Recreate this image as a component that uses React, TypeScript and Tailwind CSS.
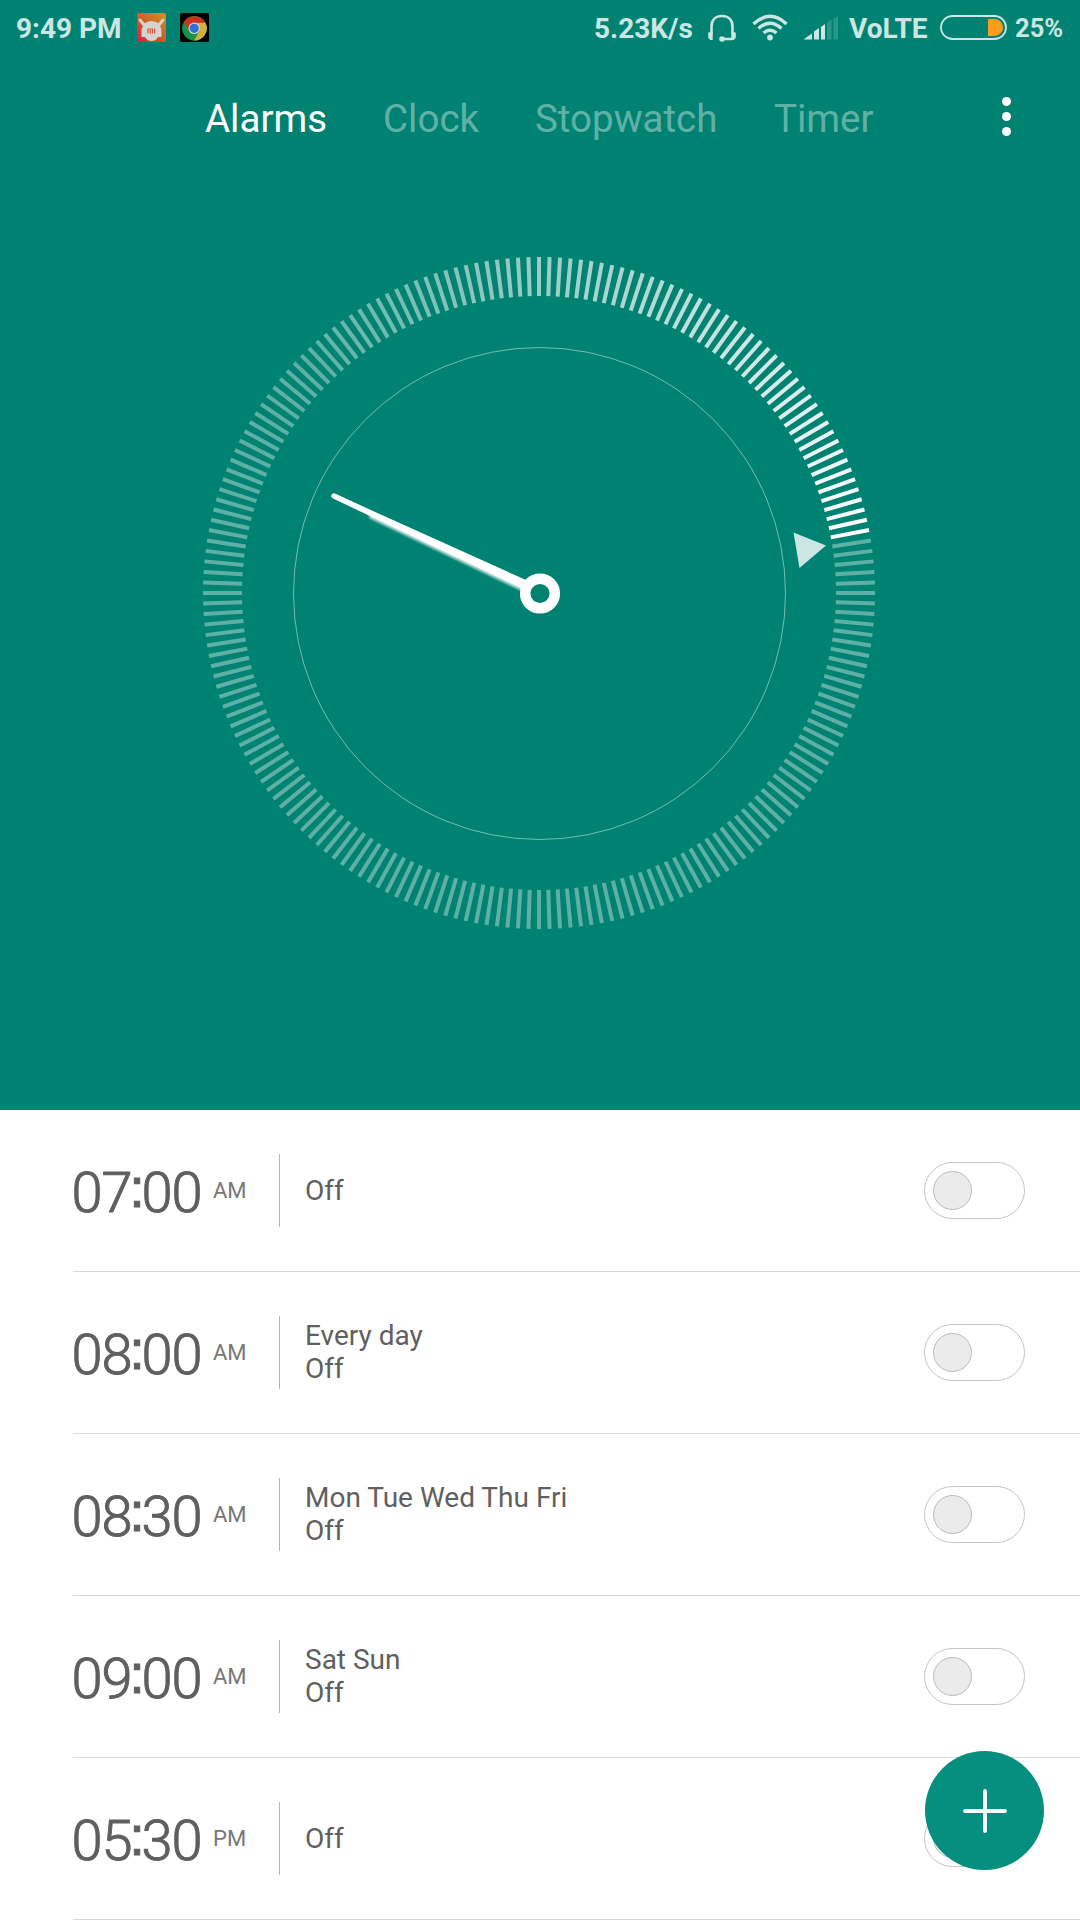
const TICKS = Array.from({ length: 200 }, (_, i) => i);

function tickOpacity(i: number) {
  const behind = (44 - i + 200) % 200;
  return Math.max(0.37, 1 - behind * 0.0091);
}

const ALARMS = [
  { time: "07:00", half: "AM", repeat: "" },
  { time: "08:00", half: "AM", repeat: "Every day" },
  { time: "08:30", half: "AM", repeat: "Mon Tue Wed Thu Fri" },
  { time: "09:00", half: "AM", repeat: "Sat Sun" },
  { time: "05:30", half: "PM", repeat: "" },
];

function MiIcon() {
  return (
    <svg width="29" height="29" viewBox="0 0 29 29" className="ml-4 -mt-[2px]">
      <defs>
        <linearGradient id="mi" x1="0" y1="1" x2="0.8" y2="0">
          <stop offset="0" stopColor="#d81b52" />
          <stop offset="0.45" stopColor="#cf5426" />
          <stop offset="1" stopColor="#d08b25" />
        </linearGradient>
      </defs>
      <rect width="29" height="29" rx="1.5" fill="url(#mi)" />
      <path d="M3 7L8 13M26 7L21 13" stroke="#d3d3d3" strokeWidth="3" strokeLinecap="round" />
      <path d="M8 10Q14.5 6 21 10Q24 13 24.5 17V24H21Q19 28 14.5 28T8 24H4.5V17Q5 13 8 10Z" fill="#d3d3d3" />
      <path d="M11 20.5V16H15.5V20.5M13.3 20.5V17M17.6 20.5V15.400" fill="none" stroke="#dc5430" strokeWidth="1.200" />
    </svg>
  );
}

function ChromeIcon() {
  return (
    <svg width="29" height="29" viewBox="0 0 29 29" className="ml-[14px] -mt-[2px]">
      <rect width="29" height="29" rx="1.500" fill="#000" />
      <circle cx="14.500" cy="15.300" r="12.300" fill="#159447" />
      <path d="M14.500 9.500H25.300A12.300 12.300 0 0 1 14 27.600L19.500 18Z" fill="#d5ad3a" />
      <path d="M3.900 9.100A12.300 12.300 0 0 1 25.300 9.800H14.500L9.200 17.500Z" fill="#ce3120" />
      <circle cx="14.200" cy="15.300" r="5.800" fill="#d3d3d3" />
      <circle cx="14.200" cy="15.300" r="4.600" fill="#316fd6" />
    </svg>
  );
}

function StatusBar() {
  return (
    <div className="flex h-14 items-center pl-4 pr-[15px] text-[28px] font-bold leading-none text-[#cce6e3]">
      <span className="w-[105px] whitespace-nowrap pt-[2px]">9:49 PM</span>
      <MiIcon />
      <ChromeIcon />
      <span className="ml-auto w-[99px] whitespace-nowrap pt-[2px]">5.23K/s</span>
      <svg width="30" height="28" viewBox="0 0 30 28" className="ml-[14px]" fill="none" stroke="currentColor">
        <path d="M4.500 20V12.500C4.500 5.500 9 2 15 2S25.500 5.500 25.500 12.500V20M25 25H15" strokeWidth="2.600" />
        <path d="M2.700 18.500V24.500M27.300 18.500V24.500M4.200 18V26M25.800 18V26" strokeWidth="3" />
        <circle cx="15" cy="25" r="2.800" fill="currentColor" stroke="none" />
      </svg>
      <svg width="36" height="27" viewBox="0 0 36 27" className="ml-[15px] -mt-[2px]" fill="none" stroke="currentColor" strokeWidth="3.400">
        <path d="M1.500 10Q18 -5.500 34.500 10M6.500 14.500Q18 4 29.500 14.500M11.500 19Q18 13.500 24.500 19" />
        <circle cx="18" cy="23.500" r="2.900" fill="currentColor" stroke="none" />
      </svg>
      <svg width="34" height="24" viewBox="0 0 34 24" className="ml-[16px]" fill="currentColor">
        <path d="M0 23.500V23L8 17.500V23.500ZM10 23.500V15.500L15 12V23.500ZM17 23.500V11L21 8V23.500Z" />
        <path d="M23 23.500V6.500L27.500 3.500V23.500ZM29.500 23.500V2.500L34 0V23.500Z" opacity=".2" />
      </svg>
      <span className="ml-[11px] w-[77px] whitespace-nowrap pt-[2px]">VoLTE</span>
      <svg width="67" height="25" viewBox="0 0 67 25" className="-mt-px ml-[14px]">
        <rect x="1" y="1" width="65" height="23" rx="11.500" fill="none" stroke="#cce6e3" strokeWidth="1.800" />
        <path d="M48 4H54.500A8.500 8.500 0 0 1 54.500 21H48Z" fill="#ff9c1b" />
      </svg>
      <span className="ml-[8px] w-[50px] whitespace-nowrap pt-[2px] text-[25.500px]">25%</span>
    </div>
  );
}

function Tabs() {
  return (
    <nav className="flex h-[126px] items-center pl-[205px] text-[38.5px] leading-none text-white/40">
      <span className="w-[178px] text-white">Alarms</span>
      <span className="w-[152px]">Clock</span>
      <span className="w-[239px]">Stopwatch</span>
      <span className="w-[228px]">Timer</span>
      <span className="mb-[5px] flex flex-col gap-[6px]">
        <i className="size-[9px] rounded-full bg-white" />
        <i className="size-[9px] rounded-full bg-white" />
        <i className="size-[9px] rounded-full bg-white" />
      </span>
    </nav>
  );
}

function Dial() {
  return (
    <svg width="1080" height="700" viewBox="0 243 1080 700" className="mt-[61px] block">
      <defs>
        <filter id="soft" x="-5%" y="-5%" width="110%" height="110%">
          <feGaussianBlur stdDeviation="0.8" />
        </filter>
      </defs>
      {TICKS.map((i) => (
        <path key={i} d="M539 257V296" stroke="#fff" strokeWidth="4" opacity={tickOpacity(i)} transform={`rotate(${i * 1.8} 539 593)`} />
      ))}
      <circle cx="539.500" cy="593.500" r="246" fill="none" stroke="#fff" strokeOpacity=".45" strokeWidth="1" />
      <path d="M793.500 532.500L826 545.500L799.500 568Z" fill="#cce6e3" />
      <path d="M370 512L369 518L522 591L526 583Z" fill="#fff" opacity=".75" filter="url(#soft)" />
      <path d="M335 493.500L373 511L526 580L522 588.500L371 516.500L333 498.500A2.600 2.600 0 0 1 335 493.500Z" fill="#fff" />
      <circle cx="540" cy="593.500" r="14.800" fill="#008272" stroke="#fff" strokeWidth="10.500" />
    </svg>
  );
}

function Time({ value }: { value: string }) {
  const [hours, minutes] = value.split(":");
  return (
    <span className="flex w-[141px] pt-1 text-[56px] font-light leading-none [-webkit-text-stroke:1px_#5f5f5f]">
      {hours.split("").map((d, i) => (
        <span key={i} className="flex w-[30px] justify-center">{d}</span>
      ))}
      <span className="-mt-[5px] flex w-[10px] justify-center font-['Liberation_Sans',sans-serif] font-normal [-webkit-text-stroke:1px_#5f5f5f]">:</span>
      {minutes.split("").map((d, i) => (
        <span key={i} className="flex w-[30px] justify-center">{d}</span>
      ))}
    </span>
  );
}

function Toggle() {
  return (
    <span className="ml-auto mr-[55px] flex h-[57px] w-[101px] items-center rounded-full border border-[#c4c4c4] pl-2">
      <i className="size-[39px] rounded-full border border-[#bbb] bg-[#ebebeb]" />
    </span>
  );
}

export default function App() {
  return (
    <main className="relative h-[1920px] w-[1080px] overflow-hidden bg-white font-['Roboto',sans-serif]">
      <header className="h-[1110px] bg-[#008272]">
        <StatusBar />
        <Tabs />
        <Dial />
      </header>
      <ul className="pl-[73px] text-[#5f5f5f]">
        {ALARMS.map((a) => (
          <li key={a.time} className="flex h-[162px] items-center border-b border-[#d8d8d8]">
            <span className="-ml-px flex">
              <Time value={a.time} />
            </span>
            <span className="w-[66px] text-[22px] leading-none text-[#777]">{a.half}</span>
            <span className="h-[73px] w-px bg-[#b5b5b5]" />
            <span className={a.repeat ? "-mt-[2px] ml-[25px] text-[28px] leading-[33px]" : "ml-[25px] text-[28px] leading-[33px]"}>
              {a.repeat && <span className="block">{a.repeat}</span>}
              <span className="block">Off</span>
            </span>
            <Toggle />
          </li>
        ))}
      </ul>
      <button className="absolute bottom-[50px] right-9 flex size-[119px] items-center justify-center rounded-full bg-[#068f7e]">
        <svg width="44" height="44" viewBox="0 0 44 44" stroke="#fff" strokeWidth="3.800" strokeLinecap="round">
          <path d="M2 22H42M22 2V42" />
        </svg>
      </button>
    </main>
  );
}
